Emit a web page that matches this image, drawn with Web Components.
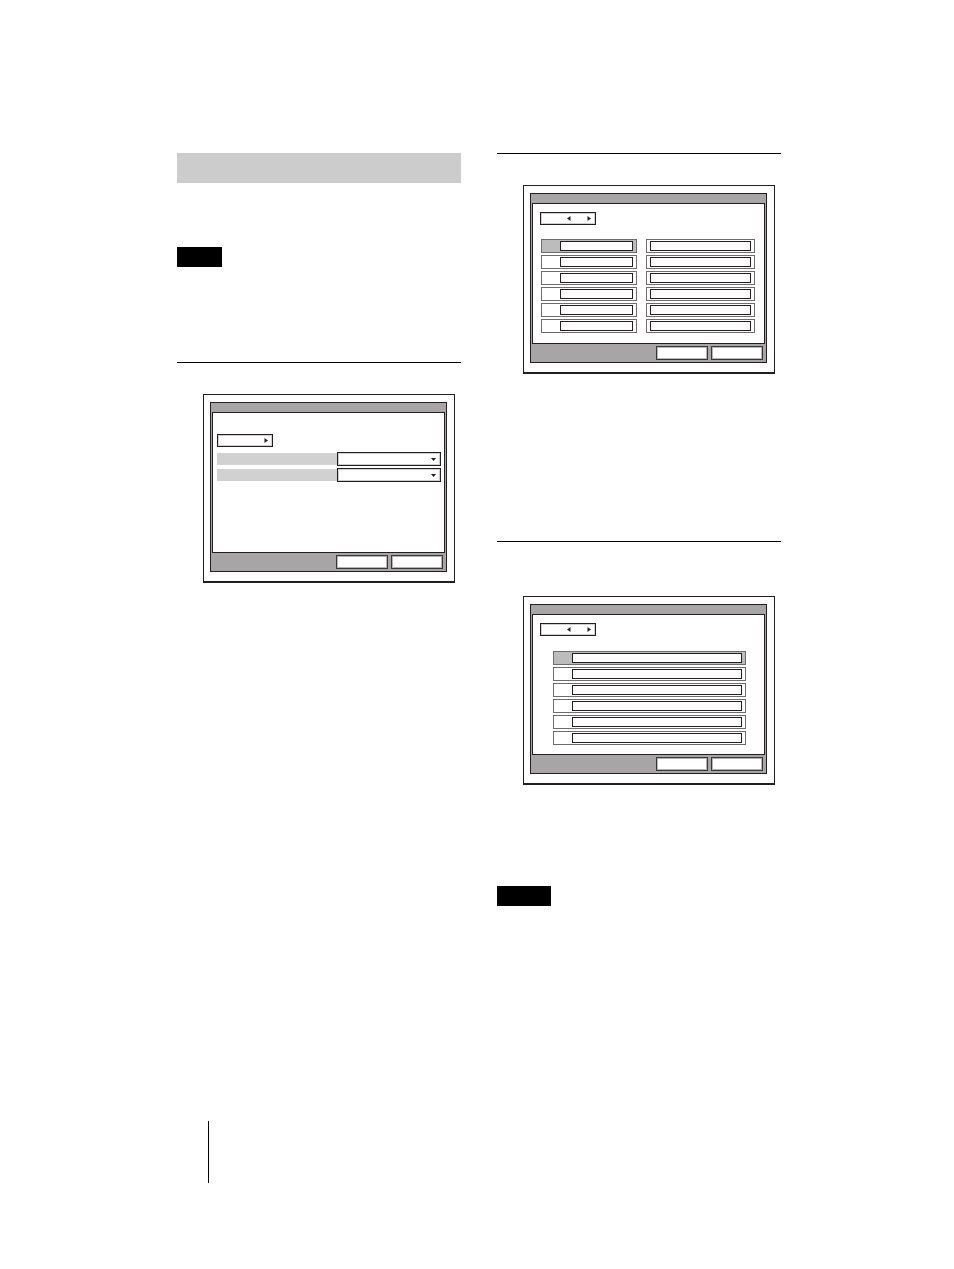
<!DOCTYPE html>
<html lang="en">
<head>
<meta charset="utf-8">
<meta name="viewport" content="width=device-width, initial-scale=1">
<title>Manual</title>
<style>
    body {
        margin: 0;
        background: white;
        font-family: "Liberation Sans", Arial, sans-serif;
    }
</style>
</head>
<body>
<manual-page>
    <manual-heading slot="left"></manual-heading>
    <note-tag slot="left" style="--space: 64px; --width: 45px"></note-tag>
    <section-rule slot="left" style="--space: 95px"></section-rule>
    <menu-screen slot="left" style="--space: 31px">
        <setup-panel></setup-panel>
    </menu-screen>

    <section-rule slot="right"></section-rule>
    <menu-screen slot="right" style="--space: 31px">
        <preset-panel columns="2"></preset-panel>
    </menu-screen>
    <section-rule slot="right" style="--space: 167px"></section-rule>
    <menu-screen slot="right" style="--space: 54px">
        <preset-panel columns="1"></preset-panel>
    </menu-screen>
    <note-tag slot="right" style="--space: 101px; --width: 54px"></note-tag>
</manual-page>

<script>
class ManualPage extends HTMLElement {
    constructor() {
        super();
        this.attachShadow({ mode: "open" });
        this.shadowRoot.innerHTML = `
        <style>
            :host {
                display: flex;
                flex-direction: column;
                box-sizing: border-box;
                min-height: 100vh;
                padding: 153px 173px 86px 177px;
            }
            main {
                display: grid;
                grid-template-columns: 1fr 1fr;
                column-gap: 36px;
            }
            .column {
                display: flex;
                flex-direction: column;
                min-width: 0;
            }
            footer {
                margin-top: auto;
                margin-left: 31px;
                height: 62px;
                border-left: 1px solid black;
            }
        </style>
        <main>
            <div class="column"><slot name="left"></slot></div>
            <div class="column"><slot name="right"></slot></div>
        </main>
        <footer></footer>
        `;
    }
}

class ManualHeading extends HTMLElement {
    constructor() {
        super();
        this.attachShadow({ mode: "open" });
        this.shadowRoot.innerHTML = `
        <style>
            :host {
                display: block;
                min-height: 30px;
                background: #cccccc;
            }
        </style>
        <slot></slot>
        `;
    }
}

class NoteTag extends HTMLElement {
    constructor() {
        super();
        this.attachShadow({ mode: "open" });
        this.shadowRoot.innerHTML = `
        <style>
            :host {
                display: block;
                width: var(--width);
                min-height: 20px;
                margin-top: var(--space, 0);
                background: black;
                color: white;
            }
        </style>
        <slot></slot>
        `;
    }
}

class SectionRule extends HTMLElement {
    constructor() {
        super();
        this.attachShadow({ mode: "open" });
        this.shadowRoot.innerHTML = `
        <style>
            :host {
                display: block;
                margin-top: var(--space, 0);
                border-top: 1px solid black;
            }
        </style>
        `;
    }
}

// Monitor outline with a title bar, a content area and two buttons
class MenuScreen extends HTMLElement {
    constructor() {
        super();
        this.attachShadow({ mode: "open" });
        this.shadowRoot.innerHTML = `
        <style>
            :host {
                display: block;
                margin: var(--space, 0) 6px 0 26px;
                padding: 7px 7px 9px 6px;
                border: 1px solid #231f20;
                border-bottom-width: 2px;
            }
            .window {
                border: 1px solid #231f20;
                background: #a7a5a6;
            }
            .title {
                height: 9px;
            }
            .content {
                box-sizing: border-box;
                min-height: 141px;
                margin: 0 1px;
                border: 1px solid #231f20;
                background: white;
            }
            .actions {
                display: flex;
                justify-content: flex-end;
                gap: 3px;
                padding: 2px 3px;
            }
            button {
                box-sizing: border-box;
                width: 52px;
                height: 14px;
                padding: 0;
                border: 1px solid #3a3738;
                border-radius: 0;
                background: white;
                box-shadow: inset 0 0 0 1px #b5b3b4;
            }
        </style>
        <div class="window">
            <div class="title"></div>
            <div class="content"><slot></slot></div>
            <div class="actions">
                <button type="button" aria-label="OK"></button>
                <button type="button" aria-label="Cancel"></button>
            </div>
        </div>
        `;
    }
}

class PageSpinner extends HTMLElement {
    constructor() {
        super();
        this.attachShadow({ mode: "open" });
    }

    connectedCallback() {
        const previous = this.hasAttribute("first") ? "" : `
            <button type="button" aria-label="Previous page">
                <svg viewBox="0 0 4 5"><path d="M3.5 0V5L0 2.5Z"/></svg>
            </button>`;

        this.shadowRoot.innerHTML = `
        <style>
            :host {
                display: flex;
                box-sizing: border-box;
                align-items: center;
                justify-content: flex-end;
                gap: 16px;
                width: 56px;
                height: 13px;
                padding-right: 4px;
                border: 1px solid #231f20;
                box-shadow: inset 0 0 0 1px #d0cfd0;
            }
            button {
                display: flex;
                width: 4px;
                height: 5px;
                padding: 0;
                border: 0;
                background: none;
            }
            svg {
                width: 4px;
                height: 5px;
                fill: #231f20;
            }
        </style>
        ${previous}
        <button type="button" aria-label="Next page">
            <svg viewBox="0 0 4 5"><path d="M0.5 0V5L4 2.5Z"/></svg>
        </button>
        `;
    }
}

class SelectRow extends HTMLElement {
    constructor() {
        super();
        this.attachShadow({ mode: "open" });
        this.shadowRoot.innerHTML = `
        <style>
            :host {
                display: grid;
                grid-template-columns: 1fr 104px;
                align-items: center;
            }
            label {
                height: 12px;
                background: #d1d1d1;
            }
            .box {
                display: grid;
                align-items: center;
            }
            select, svg {
                grid-area: 1 / 1;
            }
            select {
                appearance: none;
                box-sizing: border-box;
                width: 100%;
                height: 14px;
                padding: 0;
                border: 1px solid #231f20;
                border-radius: 0;
                background: white;
                box-shadow: inset 0 0 0 1px #d0cfd0;
            }
            svg {
                justify-self: end;
                width: 5px;
                height: 3px;
                margin-right: 5px;
                fill: #231f20;
                pointer-events: none;
            }
        </style>
        <label for="choice"></label>
        <div class="box">
            <select id="choice"></select>
            <svg viewBox="0 0 5 3"><path d="M0 0H5L2.5 3Z"/></svg>
        </div>
        `;
    }
}

class InputRow extends HTMLElement {
    constructor() {
        super();
        this.attachShadow({ mode: "open" });
        this.shadowRoot.innerHTML = `
        <style>
            :host {
                display: grid;
                grid-template-columns: 18px 1fr;
                padding: 1px 3px 1px 0;
                border: 1px solid #6d6b6c;
            }
            :host([plain]) {
                grid-template-columns: 3px 1fr;
            }
            :host([current]) {
                background: #bcbcbc;
            }
            input {
                box-sizing: border-box;
                width: 100%;
                min-width: 0;
                height: 10px;
                padding: 0;
                border: 1px solid #231f20;
                border-radius: 0;
                background: white;
                font-size: 8px;
            }
        </style>
        <label for="value"></label>
        <input id="value" type="text">
        `;
    }
}

class SetupPanel extends HTMLElement {
    constructor() {
        super();
        this.attachShadow({ mode: "open" });
        this.shadowRoot.innerHTML = `
        <style>
            :host {
                display: block;
                padding: 21px 3px 0 4px;
            }
            .rows {
                display: grid;
                gap: 2px;
                margin-top: 5px;
            }
        </style>
        <page-spinner first></page-spinner>
        <div class="rows">
            <select-row></select-row>
            <select-row></select-row>
        </div>
        `;
    }
}

class PresetPanel extends HTMLElement {
    constructor() {
        super();
        this.attachShadow({ mode: "open" });
    }

    connectedCallback() {
        const paired = this.getAttribute("columns") === "2";
        let rows = "";
        for (let i = 0; i < 6; i++) {
            rows += `<input-row ${i === 0 ? "current" : ""}></input-row>`;
            if (paired) rows += `<input-row plain></input-row>`;
        }

        this.shadowRoot.innerHTML = `
        <style>
            :host {
                display: block;
                padding: 8px 9px 0 7px;
            }
            .rows {
                display: grid;
                gap: 2px 9px;
                margin: 15px 9px 0 13px;
            }
            .rows.paired {
                grid-template-columns: 96fr 109fr;
                margin: 14px 0 0 1px;
            }
        </style>
        <page-spinner></page-spinner>
        <div class="rows ${paired ? "paired" : ""}">${rows}</div>
        `;
    }
}

customElements.define("manual-page", ManualPage);
customElements.define("manual-heading", ManualHeading);
customElements.define("note-tag", NoteTag);
customElements.define("section-rule", SectionRule);
customElements.define("menu-screen", MenuScreen);
customElements.define("page-spinner", PageSpinner);
customElements.define("select-row", SelectRow);
customElements.define("input-row", InputRow);
customElements.define("setup-panel", SetupPanel);
customElements.define("preset-panel", PresetPanel);
</script>
</body>
</html>
